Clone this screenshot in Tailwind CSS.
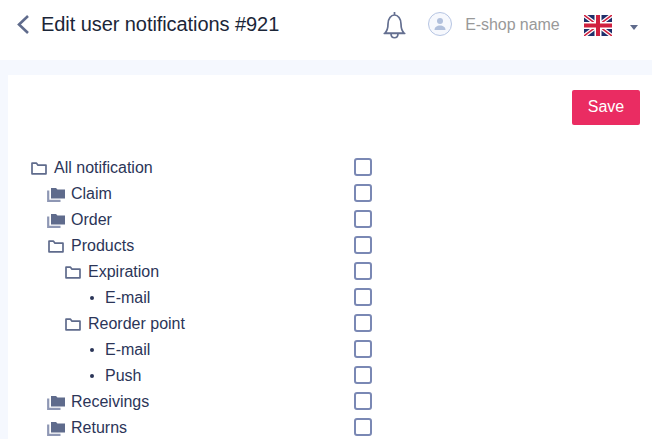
<!DOCTYPE html>
<html lang="en">
<head>
    <meta charset="UTF-8">
    <title>Edit user notifications</title>
    <script src="https://cdn.jsdelivr.net/npm/@tailwindcss/browser@4"></script>
</head>
<body class="bg-[#f5f8fe] font-['Liberation_Sans',Arial,sans-serif] h-[439px] overflow-hidden">
    <!-- Header -->
    <header class="h-[60px] bg-white flex items-start relative">
        <svg class="ml-[16px] mt-[14px] w-[14px] h-[21px]" viewBox="0 0 14 21" fill="none" stroke="#5f6b8c" stroke-width="2.600"><path d="M12 2 L3 10.500 L12 19"/></svg>
        <h1 class="ml-[11px] mt-[10px] text-[20px] leading-[28px] tracking-[-0.07px] text-[#1b2638]">Edit user notifications #921</h1>
        <svg class="ml-[103px] mt-[11px] w-[25px] h-[28px]" viewBox="0 0 25 28" fill="none" stroke="#646f90" stroke-width="1.700"><path d="M12.500 1v3M3 22c2-2 3-4 3-9 0-5.500 3-9 6.500-9s6.500 3.500 6.500 9c0 5 1 7 3 9zM1.800 22.500h21.400M9 23c.3 5 6.700 5 7 0"/></svg>
        <div class="ml-[21px] mt-[12px] w-[24px] h-[24px] rounded-full border border-[#b6c5e3] bg-[#f6f8fd] flex items-center justify-center">
            <svg class="w-[16px] h-[16px]" viewBox="0 0 16 16" fill="#b1c0dc"><circle cx="8" cy="5" r="3"/><path d="M2.500 14c0-3 2.500-4.500 5.500-4.500s5.500 1.500 5.500 4.500z"/></svg>
        </div>
        <span class="ml-[13px] mt-[15px] text-[16px] leading-[20px] tracking-[-0.07px] text-[#999999]">E-shop name</span>
        <svg class="ml-[24px] mt-[15px] w-[28px] h-[21px]" viewBox="0 0 28 21">
            <rect width="28" height="21" fill="#1f2f6b"/>
            <path d="M0 0L28 21M28 0L0 21" stroke="#fff" stroke-width="4"/>
            <path d="M0 0L28 21M28 0L0 21" stroke="#d0213f" stroke-width="1.500"/>
            <path d="M14 0V21M0 10.500H28" stroke="#fff" stroke-width="7"/>
            <path d="M14 0V21M0 10.500H28" stroke="#d0213f" stroke-width="4"/>
        </svg>
        <div class="ml-[18px] mt-[25px] w-0 h-0 border-x-[4.5px] border-x-transparent border-t-[5px] border-t-[#5f6b8c]"></div>
    </header>

    <!-- Card -->
    <main class="mt-[15px] ml-[8px] bg-white h-[364px] overflow-hidden">
        <div class="flex justify-end pr-[12px] pt-[15px]">
            <button class="w-[68px] h-[35px] pb-[2px] bg-[#ea2c62] text-white text-[16px] rounded-[2px]">Save</button>
        </div>
        <div class="mt-[29px] flex flex-col text-[16px] leading-[26px] text-[#2b3558] w-[364px]">
            <div class="h-[26px] flex items-center justify-between pl-[23px]"><span class="flex items-center pt-[2px]"><svg class="w-[16px] h-[13px] mr-[7px]" viewBox="0 0 16 13" fill="none" stroke="#5f6b8c" stroke-width="1.700" stroke-linejoin="round"><path d="M1 11.800V1.200h4.500l1.500 2h8v8.600z"/></svg>All notification</span><input type="checkbox" class="appearance-none w-[18px] h-[18px] border-2 border-[#7a88b4] rounded-[3px]"></div>
            <div class="h-[26px] flex items-center justify-between pl-[39px]"><span class="flex items-center pt-[2px]"><svg class="w-[18px] h-[15px] mr-[6px]" viewBox="0 0 18 15"><path d="M1.200 3.500v10.300h12.300" fill="none" stroke="#8e97b4" stroke-width="2.200"/><path d="M4 11.500V1h5l1.500 1.500H18v9z" fill="#5f6b8c"/></svg>Claim</span><input type="checkbox" class="appearance-none w-[18px] h-[18px] border-2 border-[#7a88b4] rounded-[3px]"></div>
            <div class="h-[26px] flex items-center justify-between pl-[39px]"><span class="flex items-center pt-[2px]"><svg class="w-[18px] h-[15px] mr-[6px]" viewBox="0 0 18 15"><path d="M1.200 3.500v10.300h12.300" fill="none" stroke="#8e97b4" stroke-width="2.200"/><path d="M4 11.500V1h5l1.500 1.500H18v9z" fill="#5f6b8c"/></svg>Order</span><input type="checkbox" class="appearance-none w-[18px] h-[18px] border-2 border-[#7a88b4] rounded-[3px]"></div>
            <div class="h-[26px] flex items-center justify-between pl-[40px]"><span class="flex items-center pt-[2px]"><svg class="w-[16px] h-[13px] mr-[7px]" viewBox="0 0 16 13" fill="none" stroke="#5f6b8c" stroke-width="1.700" stroke-linejoin="round"><path d="M1 11.800V1.200h4.500l1.500 2h8v8.600z"/></svg>Products</span><input type="checkbox" class="appearance-none w-[18px] h-[18px] border-2 border-[#7a88b4] rounded-[3px]"></div>
            <div class="h-[26px] flex items-center justify-between pl-[57px]"><span class="flex items-center pt-[2px]"><svg class="w-[16px] h-[13px] mr-[7px]" viewBox="0 0 16 13" fill="none" stroke="#5f6b8c" stroke-width="1.700" stroke-linejoin="round"><path d="M1 11.800V1.200h4.500l1.500 2h8v8.600z"/></svg>Expiration</span><input type="checkbox" class="appearance-none w-[18px] h-[18px] border-2 border-[#7a88b4] rounded-[3px]"></div>
            <div class="h-[26px] flex items-center justify-between pl-[82px]"><span class="flex items-center pt-[2px]"><span class="w-[4px] h-[4px] rounded-full bg-[#2b3558] mr-[11px]"></span>E-mail</span><input type="checkbox" class="appearance-none w-[18px] h-[18px] border-2 border-[#7a88b4] rounded-[3px]"></div>
            <div class="h-[26px] flex items-center justify-between pl-[57px]"><span class="flex items-center pt-[2px]"><svg class="w-[16px] h-[13px] mr-[7px]" viewBox="0 0 16 13" fill="none" stroke="#5f6b8c" stroke-width="1.700" stroke-linejoin="round"><path d="M1 11.800V1.200h4.500l1.500 2h8v8.600z"/></svg>Reorder point</span><input type="checkbox" class="appearance-none w-[18px] h-[18px] border-2 border-[#7a88b4] rounded-[3px]"></div>
            <div class="h-[26px] flex items-center justify-between pl-[82px]"><span class="flex items-center pt-[2px]"><span class="w-[4px] h-[4px] rounded-full bg-[#2b3558] mr-[11px]"></span>E-mail</span><input type="checkbox" class="appearance-none w-[18px] h-[18px] border-2 border-[#7a88b4] rounded-[3px]"></div>
            <div class="h-[26px] flex items-center justify-between pl-[82px]"><span class="flex items-center pt-[2px]"><span class="w-[4px] h-[4px] rounded-full bg-[#2b3558] mr-[11px]"></span>Push</span><input type="checkbox" class="appearance-none w-[18px] h-[18px] border-2 border-[#7a88b4] rounded-[3px]"></div>
            <div class="h-[26px] flex items-center justify-between pl-[39px]"><span class="flex items-center pt-[2px]"><svg class="w-[18px] h-[15px] mr-[6px]" viewBox="0 0 18 15"><path d="M1.200 3.500v10.300h12.300" fill="none" stroke="#8e97b4" stroke-width="2.200"/><path d="M4 11.500V1h5l1.500 1.500H18v9z" fill="#5f6b8c"/></svg>Receivings</span><input type="checkbox" class="appearance-none w-[18px] h-[18px] border-2 border-[#7a88b4] rounded-[3px]"></div>
            <div class="h-[26px] flex items-center justify-between pl-[39px]"><span class="flex items-center pt-[2px]"><svg class="w-[18px] h-[15px] mr-[6px]" viewBox="0 0 18 15"><path d="M1.200 3.500v10.300h12.300" fill="none" stroke="#8e97b4" stroke-width="2.200"/><path d="M4 11.500V1h5l1.500 1.500H18v9z" fill="#5f6b8c"/></svg>Returns</span><input type="checkbox" class="appearance-none w-[18px] h-[18px] border-2 border-[#7a88b4] rounded-[3px]"></div>
        </div>
    </main>
</body>
</html>
